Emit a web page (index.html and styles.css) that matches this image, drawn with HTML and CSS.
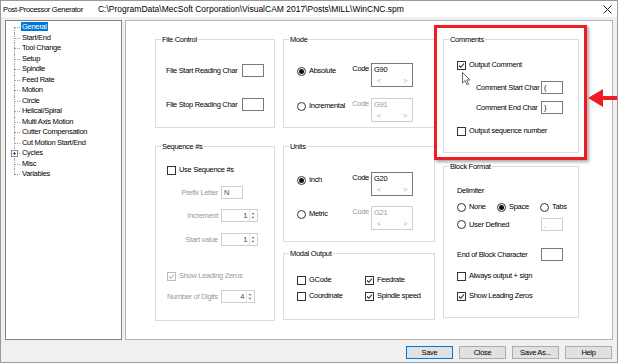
FILE: index.html
```html
<!DOCTYPE html>
<html lang="en">
<head>
    <meta charset="UTF-8">
    <title>Post-Processor Generator</title>
    <link rel="stylesheet" href="styles.css">
</head>
<body>
    <div class="window">
        <div class="titlebar">
            <span class="title">Post-Processor Generator<span class="path">C:\ProgramData\MecSoft Corporation\VisualCAM 2017\Posts\MILL\WinCNC.spm</span></span>
            <svg class="close" width="9" height="9" viewBox="0 0 9 9"><path d="M0.5 0.5L8.5 8.5M8.5 0.5L0.5 8.5" stroke="#222" stroke-width="1"/></svg>
        </div>

        <div class="main">
            <ul class="tree">
                <li><span class="selected">General</span></li>
                <li>Start/End</li>
                <li>Tool Change</li>
                <li>Setup</li>
                <li>Spindle</li>
                <li>Feed Rate</li>
                <li>Motion</li>
                <li>Circle</li>
                <li>Helical/Spiral</li>
                <li>Multi Axis Motion</li>
                <li>Cutter Compensation</li>
                <li>Cut Motion Start/End</li>
                <li class="has-children"><svg class="expander" width="7" height="7" viewBox="0 0 7 7"><rect x="0.5" y="0.5" width="6" height="6" fill="#fff" stroke="#8a8a8a"/><path d="M2 3.5H5M3.5 2V5" stroke="#2a55a8"/></svg>Cycles</li>
                <li>Misc</li>
                <li>Variables</li>
            </ul>

            <div class="page">
                <div class="col col-1">
                    <div class="group file-control">
                        <div class="group-title">File Control</div>
                        <div class="row edit-row fc-1"><span>File Start Reading Char</span><span class="edit"></span></div>
                        <div class="row edit-row fc-2"><span>File Stop Reading Char</span><span class="edit"></span></div>
                    </div>

                    <div class="group sequence">
                        <div class="group-title">Sequence #s</div>
                        <div class="row opt seq-use"><span class="chk"></span>Use Sequence #s</div>
                        <div class="row seq-row seq-prefix"><span class="seq-label">Prefix Letter</span><span class="edit light">N</span></div>
                        <div class="row seq-row seq-inc"><span class="seq-label">Increment</span><span class="spin"><span class="spin-val">1</span><svg width="7" height="11" viewBox="0 0 7 11"><path d="M1.5 4L3.5 2L5.5 4Z M1.5 7L3.5 9L5.5 7Z" fill="#7a7a7a"/></svg></span></div>
                        <div class="row seq-row seq-start"><span class="seq-label">Start value</span><span class="spin"><span class="spin-val">1</span><svg width="7" height="11" viewBox="0 0 7 11"><path d="M1.5 4L3.5 2L5.5 4Z M1.5 7L3.5 9L5.5 7Z" fill="#7a7a7a"/></svg></span></div>
                        <div class="row opt seq-zeros disabled"><span class="chk on"><svg width="7" height="7" viewBox="0 0 7 7"><path d="M1 3.5L2.8 5.3L6 1.5" fill="none" stroke="#b5b5b5" stroke-width="1.1"/></svg></span>Show Leading Zeros</div>
                        <div class="row seq-row seq-digits"><span class="seq-label">Number of Digits</span><span class="spin short"><span class="spin-val">4</span><svg width="7" height="11" viewBox="0 0 7 11"><path d="M1.5 4L3.5 2L5.5 4Z M1.5 7L3.5 9L5.5 7Z" fill="#7a7a7a"/></svg></span></div>
                    </div>
                </div>

                <div class="col col-2">
                    <div class="group mode">
                        <div class="group-title">Mode</div>
                        <div class="row code-row mode-1">
                            <div class="opt"><span class="rad on"></span>Absolute</div>
                            <div class="code"><span class="code-label">Code</span><div class="codebox"><span>G90</span><span class="scroll"><i>&lt;</i><i>&gt;</i></span></div></div>
                        </div>
                        <div class="row code-row mode-2">
                            <div class="opt"><span class="rad"></span>Incremental</div>
                            <div class="code disabled"><span class="code-label">Code</span><div class="codebox"><span>G91</span><span class="scroll"><i>&lt;</i><i>&gt;</i></span></div></div>
                        </div>
                    </div>

                    <div class="group units">
                        <div class="group-title">Units</div>
                        <div class="row code-row units-1">
                            <div class="opt"><span class="rad on"></span>Inch</div>
                            <div class="code"><span class="code-label">Code</span><div class="codebox"><span>G20</span><span class="scroll"><i>&lt;</i><i>&gt;</i></span></div></div>
                        </div>
                        <div class="row code-row units-2">
                            <div class="opt"><span class="rad"></span>Metric</div>
                            <div class="code disabled"><span class="code-label">Code</span><div class="codebox"><span>G21</span><span class="scroll"><i>&lt;</i><i>&gt;</i></span></div></div>
                        </div>
                    </div>

                    <div class="group modal">
                        <div class="group-title">Modal Output</div>
                        <div class="row modal-row modal-1">
                            <div class="opt modal-first"><span class="chk"></span>GCode</div>
                            <div class="opt"><span class="chk on"><svg width="7" height="7" viewBox="0 0 7 7"><path d="M1 3.5L2.8 5.3L6 1.5" fill="none" stroke="#222" stroke-width="1.1"/></svg></span>Feedrate</div>
                        </div>
                        <div class="row modal-row modal-2">
                            <div class="opt modal-first"><span class="chk"></span>Coordinate</div>
                            <div class="opt"><span class="chk on"><svg width="7" height="7" viewBox="0 0 7 7"><path d="M1 3.5L2.8 5.3L6 1.5" fill="none" stroke="#222" stroke-width="1.1"/></svg></span>Spindle speed</div>
                        </div>
                    </div>
                </div>

                <div class="col col-3">
                    <div class="group comments">
                        <div class="group-title">Comments</div>
                        <div class="row opt cm-output"><span class="chk on"><svg width="7" height="7" viewBox="0 0 7 7"><path d="M1 3.5L2.8 5.3L6 1.5" fill="none" stroke="#222" stroke-width="1.1"/></svg></span>Output Comment</div>
                        <div class="row cm-row cm-start"><span class="cm-label">Comment Start Char</span><span class="edit">(</span></div>
                        <div class="row cm-row cm-end"><span class="cm-label">Comment End Char</span><span class="edit">)</span></div>
                        <div class="row opt cm-seq"><span class="chk"></span>Output sequence number</div>
                    </div>

                    <div class="group block">
                        <div class="group-title">Block Format</div>
                        <div class="row bf-delim">Delimiter</div>
                        <div class="row bf-radios">
                            <div class="opt bf-none"><span class="rad"></span>None</div>
                            <div class="opt bf-space"><span class="rad on"></span>Space</div>
                            <div class="opt"><span class="rad"></span>Tabs</div>
                        </div>
                        <div class="row bf-user">
                            <div class="opt bf-label"><span class="rad"></span>User Defined</div>
                            <span class="edit light dot">.</span>
                        </div>
                        <div class="row bf-eob"><span class="bf-label">End of Block Character</span><span class="edit"></span></div>
                        <div class="row opt bf-sign"><span class="chk"></span>Always output + sign</div>
                        <div class="row opt bf-zeros"><span class="chk on"><svg width="7" height="7" viewBox="0 0 7 7"><path d="M1 3.5L2.8 5.3L6 1.5" fill="none" stroke="#222" stroke-width="1.1"/></svg></span>Show Leading Zeros</div>
                    </div>
                </div>
            </div>
        </div>

        <div class="footer">
            <button class="btn default">Save</button>
            <button class="btn">Close</button>
            <button class="btn">Save As...</button>
            <button class="btn">Help</button>
        </div>

        <!-- annotation drawn over the dialog -->
        <div class="highlight"></div>
        <svg class="arrow" width="32" height="22" viewBox="0 0 32 22"><polygon points="0,11 15,2 15,9 32,9 32,13 15,13 15,20" fill="#ee1c24"/></svg>
        <svg class="cursor" width="10" height="14" viewBox="0 0 10 14"><path d="M0.5 0.5V11L3 8.6L5 12.8L6.6 12.1L4.7 8H8Z" fill="#fff" stroke="#555" stroke-width="0.9"/></svg>
    </div>
</body>
</html>
```

FILE: styles.css
```css
* {
    box-sizing: border-box;
}
body {
    margin: 0;
    background: #fff;
    font-family: "Liberation Sans", Arial, sans-serif;
    font-size: 7.5px;
    letter-spacing: -0.3px;
    line-height: 10px;
    color: #000;
}
.window {
    position: relative;
    width: 618px;
    height: 363px;
    border: 1px solid #9a9a9a;
    background: #f0f0f0;
    display: flex;
    flex-direction: column;
    overflow: hidden;
}
.titlebar {
    height: 16px;
    flex: none;
    background: #fff;
    display: flex;
    align-items: center;
    justify-content: space-between;
    padding: 0 5px 0 2px;
}
.path {
    margin-left: 15px;
    font-size: 8.5px;
    letter-spacing: 0;
}
.main {
    display: flex;
    gap: 3px;
    padding: 3px 4px 0 4px;
    flex: none;
}

/* tree */
.tree {
    width: 117px;
    height: 320px;
    margin: 0;
    padding: 1px 0 0 0;
    list-style: none;
    background: #fff;
    border: 1px solid #828282;
}
.tree li {
    position: relative;
    height: 10.5px;
    line-height: 10.5px;
    padding-left: 16px;
    white-space: nowrap;
}
.tree li::before {
    content: '';
    position: absolute;
    left: 8px;
    top: 5px;
    width: 6px;
    border-top: 1px dotted #a0a0a0;
}
.tree li::after {
    content: '';
    position: absolute;
    left: 8px;
    top: 0;
    height: 100%;
    border-left: 1px dotted #a0a0a0;
}
.tree li:first-child::after {
    top: 5px;
    height: 5.5px;
}
.tree li:last-child::after {
    height: 5px;
}
.selected {
    background: #0078d7;
    color: #fff;
    padding: 0 1px;
    margin-left: -1px;
}
.expander {
    position: absolute;
    left: 5px;
    top: 2px;
    z-index: 1;
}

/* right page */
.page {
    width: 488px;
    height: 320px;
    background: #fff;
    border: 1px solid #b4b4b4;
    padding: 18px 0 0 29px;
    display: flex;
    gap: 8px;
}
.col {
    display: flex;
    flex-direction: column;
}
.col-1 { width: 120px; }
.col-2 { width: 152px; }
.col-3 { width: 136px; }

.group {
    border: 1px solid #dcdcdc;
    display: flex;
    flex-direction: column;
}
.group-title {
    margin: -5px 0 0 5px;
    padding: 0 1px;
    width: fit-content;
    height: 10px;
    background: #fff;
}
.row {
    display: flex;
    align-items: center;
    flex: none;
}
.opt {
    display: flex;
    align-items: center;
    gap: 3px;
    height: 10px;
}
.disabled, .light, .seq-label, .code.disabled {
    color: #9a9a9a;
}

/* controls */
.edit {
    width: 22px;
    height: 13px;
    background: #fff;
    border: 1px solid #7a7a7a;
    padding: 1px 2px;
    line-height: 10px;
}
.edit.light {
    border-color: #cfcfcf;
    color: #555;
}
.edit.dot {
    line-height: 12px;
    color: #888;
}
.chk {
    width: 9px;
    height: 9px;
    border: 1px solid #333;
    background: #fff;
    display: inline-flex;
    align-items: center;
    justify-content: center;
    flex: none;
}
.disabled .chk {
    border-color: #bcbcbc;
}
.rad {
    width: 9px;
    height: 9px;
    border: 1px solid #333;
    border-radius: 50%;
    background: #fff;
    display: inline-flex;
    align-items: center;
    justify-content: center;
    flex: none;
}
.rad.on::after {
    content: '';
    width: 5px;
    height: 5px;
    border-radius: 50%;
    background: #111;
}
.spin {
    width: 37px;
    height: 13px;
    border: 1px solid #cfcfcf;
    background: #fff;
    display: flex;
    align-items: center;
    justify-content: flex-end;
    color: #444;
}
.spin.short {
    width: 34px;
}
.spin-val {
    margin-right: 2px;
}
.spin svg {
    border-left: 1px solid #e4e4e4;
    margin-right: 1px;
}
.code {
    display: flex;
    align-items: flex-start;
    gap: 2px;
    margin-left: auto;
}
.code-label {
    margin-top: 1px;
}
.codebox {
    width: 42px;
    height: 24px;
    border: 1px solid #7a7a7a;
    background: #fff;
    padding: 1px 0 0 2px;
    display: flex;
    flex-direction: column;
}
.code.disabled .codebox {
    border-color: #cfcfcf;
}
.scroll {
    display: flex;
    justify-content: space-between;
    padding: 1px 5px 0 3px;
    color: #b0b0b0;
    font-size: 7px;
}
.scroll i {
    font-style: normal;
}

/* file control */
.file-control {
    height: 89px;
}
.edit-row {
    height: 13px;
    justify-content: space-between;
    padding: 0 10px;
}
.fc-1 { margin-top: 19px; }
.fc-2 { margin-top: 21px; }

/* sequence */
.sequence {
    height: 175px;
    margin-top: 18px;
}
.seq-use {
    margin-top: 13px;
    padding-left: 11px;
}
.seq-row {
    height: 13px;
    gap: 3px;
}
.seq-label {
    width: 62px;
    text-align: right;
    white-space: nowrap;
}
.seq-prefix { margin-top: 11px; }
.seq-inc { margin-top: 10px; }
.seq-start { margin-top: 11px; }
.seq-zeros {
    margin-top: 25px;
    padding-left: 11px;
}
.seq-digits { margin-top: 9px; }

/* mode / units */
.mode {
    height: 89px;
}
.units {
    height: 96px;
    margin-top: 18px;
}
.code-row {
    height: 24px;
    align-items: flex-start;
    padding: 0 21px 0 13px;
}
.code-row .opt {
    margin-top: 3px;
}
.mode-1 { margin-top: 18px; }
.mode-2 { margin-top: 11px; }
.units-1 { margin-top: 20px; }
.units-2 { margin-top: 10px; }

/* modal output */
.modal {
    height: 67px;
    margin-top: 11px;
}
.modal-row {
    height: 10px;
    padding-left: 13px;
}
.modal-first {
    width: 68px;
}
.modal-1 { margin-top: 16px; }
.modal-2 { margin-top: 6px; }

/* comments */
.comments {
    height: 114px;
}
.cm-output {
    margin-top: 15px;
    padding-left: 13px;
}
.cm-row {
    height: 13px;
    padding-left: 32px;
}
.cm-label {
    width: 65px;
}
.cm-start { margin-top: 11px; }
.cm-end { margin-top: 7px; }
.cm-seq {
    margin-top: 12px;
    padding-left: 13px;
}

/* block format */
.block {
    height: 152px;
    margin-top: 13px;
}
.block .row {
    padding-left: 13px;
}
.bf-delim {
    height: 10px;
    margin-top: 14px;
}
.bf-radios {
    height: 10px;
    margin-top: 6px;
}
.bf-none { width: 40px; }
.bf-space { width: 43px; }
.bf-user {
    height: 13px;
    margin-top: 6px;
}
.bf-label {
    width: 84px;
}
.bf-eob {
    height: 13px;
    margin-top: 17px;
}
.bf-sign { margin-top: 10px; }
.bf-zeros { margin-top: 10px; }

/* buttons */
.footer {
    display: flex;
    justify-content: flex-end;
    gap: 6px;
    padding: 6px 5px 0 0;
}
.btn {
    width: 47px;
    height: 13px;
    padding: 0;
    border: 1px solid #adadad;
    background: #e1e1e1;
    font: inherit;
    letter-spacing: inherit;
    line-height: 11px;
    color: #000;
}
.btn.default {
    border-color: #0078d7;
}

/* annotation */
.highlight {
    position: absolute;
    left: 433px;
    top: 24px;
    width: 153px;
    height: 135px;
    border: 3px solid #ee1c24;
    box-shadow: 2px 2px 3px rgba(0, 0, 0, 0.35);
}
.arrow {
    position: absolute;
    left: 587px;
    top: 86px;
}
.cursor {
    position: absolute;
    left: 461px;
    top: 71px;
}
```
